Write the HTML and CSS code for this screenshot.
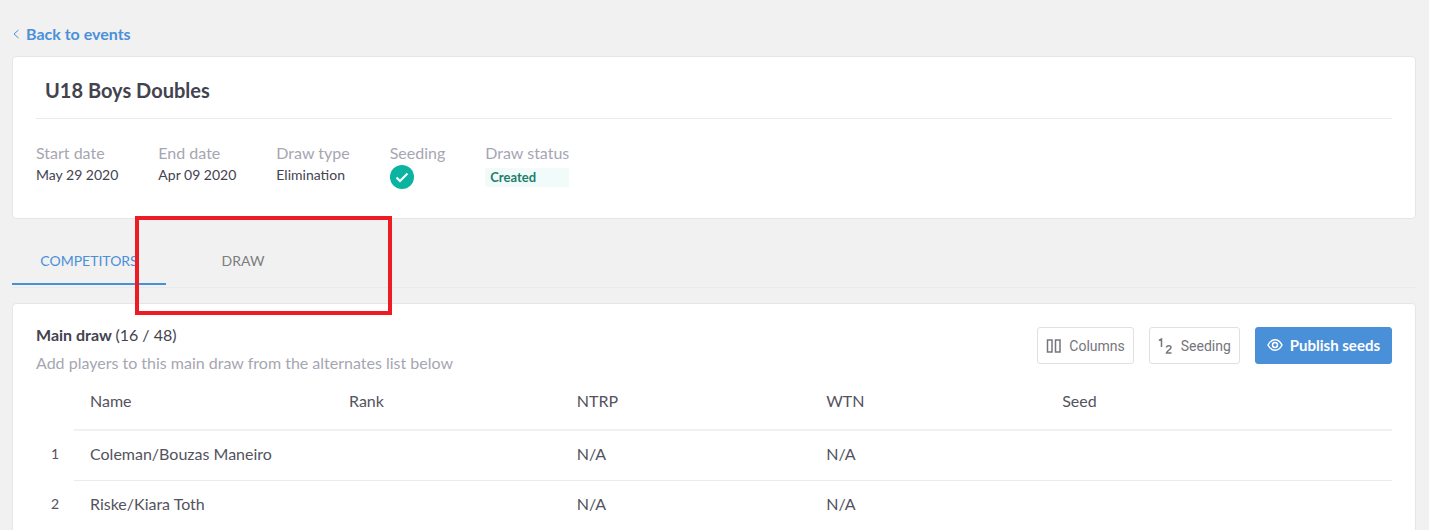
FILE: index.html
```
<!DOCTYPE html>
<html lang="en">
<head>
    <meta charset="UTF-8">
    <meta name="viewport" content="width=device-width, initial-scale=1.0">
    <title>U18 Boys Doubles</title>
    <link rel="stylesheet" href="styles.css">
</head>
<body>

<a class="back" href="#events">
    <svg width="6" height="10" viewBox="0 0 6 10" fill="none" stroke="currentColor"><path d="M5.5 1 1 5l4.500 4"/></svg>
    Back to events
</a>

<section class="card event">
    <h1>U18 Boys Doubles</h1>
    <dl class="details">
        <div>
            <dt>Start date</dt>
            <dd>May 29 2020</dd>
        </div>
        <div>
            <dt>End date</dt>
            <dd>Apr 09 2020</dd>
        </div>
        <div>
            <dt>Draw type</dt>
            <dd>Elimination</dd>
        </div>
        <div>
            <dt>Seeding</dt>
            <dd>
                <svg class="check" width="24" height="24" viewBox="0 0 24 24" role="img" aria-label="Yes"><circle cx="12" cy="12" r="12" fill="#0ab4a0"/><path d="m6.500 12.500 3.500 3.500 7.500-7.500" fill="none" stroke="#fff" stroke-width="2"/></svg>
            </dd>
        </div>
        <div>
            <dt>Draw status</dt>
            <dd class="status">Created</dd>
        </div>
    </dl>
</section>

<nav class="tabs">
    <button class="tab active" type="button">COMPETITORS</button>
    <button class="tab" type="button">DRAW</button>
    <span class="highlight"></span>
</nav>

<section class="card draw">
    <div class="draw-header">
        <div>
            <h2>Main draw <span>(16 / 48)</span></h2>
            <p>Add players to this main draw from the alternates list below</p>
        </div>
        <div class="actions">
            <button class="btn" type="button">
                <svg width="16" height="16" viewBox="0 0 16 16" fill="none" stroke="currentColor" stroke-width="1.500"><rect x="1.500" y="2" width="4.500" height="12"/><rect x="9.500" y="2" width="4.500" height="12"/></svg>
                Columns
            </button>
            <button class="btn" type="button">
                <svg width="16" height="16" viewBox="0 0 16 16" fill="none" stroke="currentColor" stroke-width="1.500"><path d="M1 2.500 3.500 1v8M8.500 9.500C8.500 7 13 7 13 9.500c0 2-4 3-4.500 5.500h5"/></svg>
                Seeding
            </button>
            <button class="btn primary" type="button">
                <svg width="16" height="14" viewBox="0 0 16 14" fill="none" stroke="currentColor" stroke-width="1.500"><path d="M1 7c3.500-7 10.500-7 14 0-3.500 7-10.500 7-14 0Z"/><circle cx="8" cy="7" r="2.500"/></svg>
                Publish seeds
            </button>
        </div>
    </div>

    <table>
        <thead>
            <tr>
                <td class="num"></td>
                <th class="name">Name</th>
                <th class="rank">Rank</th>
                <th class="ntrp">NTRP</th>
                <th class="wtn">WTN</th>
                <th>Seed</th>
            </tr>
        </thead>
        <tbody>
            <tr>
                <td class="num">1</td>
                <td>Coleman/Bouzas Maneiro</td>
                <td></td>
                <td>N/A</td>
                <td>N/A</td>
                <td></td>
            </tr>
            <tr>
                <td class="num">2</td>
                <td>Riske/Kiara Toth</td>
                <td></td>
                <td>N/A</td>
                <td>N/A</td>
                <td></td>
            </tr>
        </tbody>
    </table>
</section>

</body>
</html>
```
FILE: styles.css
```
* {
    box-sizing: border-box;
}
body {
    height: 100vh;
    margin: 0;
    padding: 23px 13px 0 12px;
    overflow: hidden;
    background-color: #f1f1f1;
    color: #43434f;
    font-family: Lato, sans-serif;
    font-size: 14px;
    line-height: 22px;
}
h1, h2, p, dl, dd {
    margin: 0;
}
.back {
    display: flex;
    align-items: center;
    gap: 7px;
    width: max-content;
    padding-left: 1px;
    color: #4a90d9;
    font-size: 16px;
    font-weight: bold;
    text-decoration: none;
}
.card {
    background-color: #fff;
    border: 1px solid #e6e6e6;
    border-radius: 4px;
}
.event {
    margin-top: 11px;
    padding: 0 23px 29px;
}
h1 {
    padding: 20px 9px 15px;
    border-bottom: 1px solid #ebebeb;
    font-size: 20px;
    font-weight: bold;
    line-height: 26px;
}
.details {
    display: flex;
    gap: 40px;
    padding-top: 23px;
}
dt {
    color: #a6a6b2;
    font-size: 16px;
}
.check {
    display: block;
    margin-top: 1px;
}
.status {
    margin-top: 4px;
    padding: 0 5px;
    background-color: #f1fbfa;
    color: #1e7d6c;
    font-size: 13px;
    font-weight: bold;
    line-height: 19px;
}

/* Tabs */
.tabs {
    position: relative;
    display: flex;
    margin: 18px 0 15px;
    padding-bottom: 2px;
    border-bottom: 1px solid #e8eaf0;
}
.tab {
    width: 154px;
    height: 48px;
    padding: 0;
    background: none;
    border: 0;
    border-bottom: 2px solid transparent;
    color: #7d7d7d;
    font-family: inherit;
    font-size: 14px;
}
.tab.active {
    border-color: #4a90d9;
    color: #4a90d9;
}
.highlight {
    position: absolute;
    top: -21px;
    left: 123px;
    width: 257px;
    height: 99px;
    border: 4px solid #ed1c24;
    pointer-events: none;
}

/* Main draw */
.draw {
    padding: 19px 23px;
}
.draw-header {
    display: flex;
    justify-content: space-between;
}
h2 {
    font-size: 16px;
    line-height: 24px;
}
h2 span {
    font-weight: normal;
}
.draw-header p {
    margin-top: 4px;
    color: #a6a6b2;
    font-size: 16px;
    line-height: 24px;
}
.actions {
    display: flex;
    align-items: flex-start;
    gap: 15px;
    padding-top: 4px;
}
.btn {
    display: flex;
    align-items: center;
    gap: 7px;
    height: 37px;
    padding: 0 8px;
    background-color: #fff;
    border: 1px solid #e0e0e0;
    border-radius: 3px;
    color: #75757d;
    font-family: Roboto, sans-serif;
    font-size: 14px;
}
.btn.primary {
    padding: 0 11px 2px;
    background-color: #4a90d9;
    border-color: #4a90d9;
    color: #fff;
    font-family: inherit;
    font-size: 15px;
    font-weight: bold;
}
table {
    width: 100%;
    border-collapse: collapse;
    table-layout: fixed;
}
th, td {
    height: 50px;
    padding: 0 16px 2px;
    border-bottom: 1px solid #ebebeb;
    color: #53535e;
    font-size: 16px;
    font-weight: normal;
    text-align: left;
}
th {
    height: 55px;
    padding-bottom: 3px;
    border-bottom: 2px solid #f1f1f1;
}
.num {
    width: 38px;
    padding: 0 0 2px;
    border: 0;
    font-size: 14px;
    text-align: center;
}
.name {
    width: 19.1%;
}
.rank {
    width: 16.8%;
}
.ntrp {
    width: 18.4%;
}
.wtn {
    width: 17.4%;
}
```
